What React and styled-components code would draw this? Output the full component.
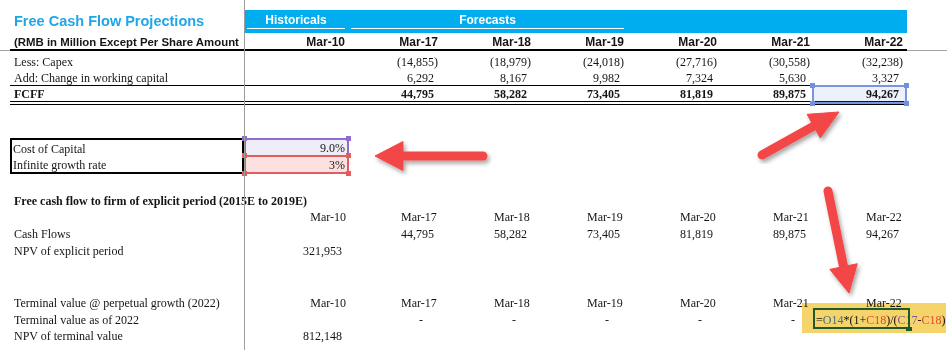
import React from 'react';
import styled, { createGlobalStyle } from 'styled-components';

const GlobalStyle = createGlobalStyle`
  html, body { margin: 0; padding: 0; background: #fff; }
  body {
    font-family: "Liberation Serif", "Times New Roman", serif;
    font-size: 12px;
    color: #151515;
  }
`;

const SANS = '"Liberation Sans", Arial, sans-serif';
const COLS = '234px 105px repeat(6, 93px)';

const Page = styled.div`
  position: relative;
  width: 947px;
  height: 350px;
  overflow: hidden;
  padding: 10px 0 0 10px;
  box-sizing: border-box;
`;

const TopRow = styled.div`
  display: grid;
  grid-template-columns: 234px 663px;
  height: 24px;
`;

const Title = styled.div`
  font-family: ${SANS};
  font-weight: 700;
  font-size: 14.5px;
  color: #1fa6e6;
  padding: 3px 0 0 4px;
  line-height: 16px;
  white-space: nowrap;
`;

const Bar = styled.div`
  display: grid;
  grid-template-columns: 105px 279px 1fr;
  height: 23px;
  background: #00aeef;
`;

const BarGroup = styled.div`
  margin: 0 ${p => p.$mr}px 0 ${p => p.$ml}px;
  padding-top: 3px;
  height: 15px;
  border-bottom: 1px solid #fff;
  color: #fff;
  font-family: ${SANS};
  font-weight: 700;
  font-size: 12px;
  line-height: 15px;
  text-align: center;
`;

const Row = styled.div`
  position: ${p => (p.$raise ? 'relative' : 'static')};
  z-index: ${p => (p.$raise ? 1 : 'auto')};
  display: grid;
  grid-template-columns: ${COLS};
  width: 897px;
  height: ${p => p.$h}px;
  box-sizing: border-box;
  margin-top: ${p => p.$mt || 0}px;
  border-bottom: ${p => p.$rule || 'none'};
  font-family: ${p => (p.$sans ? SANS : 'inherit')};
  font-weight: ${p => (p.$bold ? 700 : 400)};
`;

const Cell = styled.div`
  position: relative;
  display: flex;
  align-items: flex-end;
  justify-content: ${p => (p.$left ? 'flex-start' : 'flex-end')};
  padding: 0 ${p => p.$pr ?? 4}px 0 ${p => p.$pl ?? 0}px;
  line-height: 14px;
  font-size: ${p => p.$fs || 'inherit'};
  white-space: nowrap;
  overflow: ${p => (p.$clip ? 'hidden' : 'visible')};
  min-width: 0;
`;

const Inner = styled.span`
  display: inline-block;
  width: 37px;
  text-align: left;
`;

const Selection = styled.div`
  position: absolute;
  top: -1px;
  bottom: -3px;
  left: -2px;
  right: 0;
  border: 2px solid #7896e0;
  background: rgba(110, 145, 225, 0.13);
`;

const Handle = styled.span`
  position: absolute;
  width: 5px;
  height: 5px;
  background: ${p => p.$color};
  ${p => (p.$pos[0] === 't' ? 'top: -4px;' : 'bottom: -4px;')}
  ${p => (p.$pos[1] === 'l' ? 'left: -4px;' : 'right: -4px;')}
`;

const CostBlock = styled.div`
  display: grid;
  grid-template-columns: 234px 105px;
  margin-top: 33px;
  height: 36px;
`;

const CostLabels = styled.div`
  border: 2px solid #000;
  display: grid;
  grid-template-rows: 16px 16px;
`;

const CostLabel = styled.div`
  display: flex;
  align-items: flex-end;
  padding-left: 1px;
  line-height: 14px;
  white-space: nowrap;
`;

const CostValues = styled.div`
  display: flex;
  flex-direction: column;
`;

const TONES = {
  purple: { line: '#8f6dcc', fill: '#efedf8' },
  red: { line: '#e25d5d', fill: '#fde0e0' },
};

const ValueCell = styled.div`
  position: relative;
  box-sizing: border-box;
  height: ${p => (p.$tone === 'purple' ? 17 : 19)}px;
  border: 2px solid ${p => TONES[p.$tone].line};
  border-bottom: ${p => (p.$tone === 'purple' ? 'none' : `2px solid ${TONES[p.$tone].line}`)};
  background: ${p => TONES[p.$tone].fill};
  display: flex;
  align-items: flex-end;
  justify-content: flex-end;
  padding-right: 2px;
  line-height: 14px;
`;

const FreezeV = styled.div`
  position: absolute;
  z-index: 3;
  left: 244px;
  top: 0;
  width: 1px;
  height: 350px;
  background: #9c9c9c;
`;

const FreezeH = styled.div`
  position: absolute;
  left: 0;
  top: 50px;
  width: 947px;
  height: 1px;
  background: #a3a3a3;
`;

const Formula = styled.div`
  position: absolute;
  z-index: 4;
  left: 802px;
  top: 303px;
  width: 144px;
  height: 30px;
  box-sizing: border-box;
  padding: 9px 0 0 14px;
  background: #f6d46c;
  mix-blend-mode: multiply;
  line-height: 14px;
  white-space: nowrap;
  color: #111;
`;

const EditBox = styled.div`
  position: absolute;
  left: 11px;
  top: 5px;
  width: 97px;
  height: 21px;
  box-sizing: border-box;
  border: 2px solid #1f5a2c;
`;

const EditHandle = styled.span`
  position: absolute;
  right: -4px;
  bottom: -4px;
  width: 6px;
  height: 4px;
  background: #1f5a2c;
`;

const Ref = styled.span`
  color: ${p => p.$c};
`;

const Caret = styled.span`
  display: inline-block;
  width: 1px;
  height: 15px;
  margin-left: 1px;
  vertical-align: -3px;
  background: #000;
`;

const ArrowLayer = styled.svg`
  position: absolute;
  z-index: 5;
  left: 0;
  top: 0;
  pointer-events: none;
`;

function arrowShape(x1, y1, x2, y2, L, W) {
  const dx = x2 - x1;
  const dy = y2 - y1;
  const len = Math.hypot(dx, dy);
  const ux = dx / len;
  const uy = dy / len;
  const nx = -uy;
  const ny = ux;
  const bx = x2 - ux * L;
  const by = y2 - uy * L;
  return {
    line: { x1, y1, x2: bx + ux * 3, y2: by + uy * 3 },
    head: `${x2},${y2} ${bx + (nx * W) / 2},${by + (ny * W) / 2} ${bx - (nx * W) / 2},${by - (ny * W) / 2}`,
  };
}

const ARROWS = [
  arrowShape(483, 156, 375, 156, 28, 29),
  arrowShape(762, 155, 839, 112, 29, 27),
  arrowShape(828, 191, 849, 293, 27, 28),
];

const Arrows = () => (
  <ArrowLayer width="947" height="350" viewBox="0 0 947 350">
    <defs>
      <filter id="arrowShadow" x="-20%" y="-20%" width="140%" height="140%">
        <feDropShadow dx="2" dy="3" stdDeviation="2" floodColor="#000" floodOpacity="0.35" />
      </filter>
    </defs>
    {ARROWS.map((a, i) => (
      <g key={i} filter="url(#arrowShadow)" fill="#f34646" stroke="#f34646">
        <line {...a.line} strokeWidth="9" strokeLinecap="round" />
        <polygon points={a.head} strokeWidth="1" strokeLinejoin="round" />
      </g>
    ))}
  </ArrowLayer>
);

const MONTHS = ['Mar-17', 'Mar-18', 'Mar-19', 'Mar-20', 'Mar-21', 'Mar-22'];
const CAPEX = ['(14,855)', '(18,979)', '(24,018)', '(27,716)', '(30,558)', '(32,238)'];
const WC = ['6,292', '8,167', '9,982', '7,324', '5,630', '3,327'];
const FCFF = ['44,795', '58,282', '73,405', '81,819', '89,875', '94,267'];

export default function App() {
  return (
    <>
      <GlobalStyle />
      <Page>
        <FreezeH />
        <TopRow>
          <Title>Free Cash Flow Projections</Title>
          <Bar>
            <BarGroup $ml={3} $mr={4}>Historicals</BarGroup>
            <BarGroup $ml={2} $mr={4}>Forecasts</BarGroup>
          </Bar>
        </TopRow>

        <Row $h={17} $rule="2px solid #000" $sans $bold $raise>
          <Cell $left $pl={4} $pr={0} $fs="11.4px">(RMB in Million Except Per Share Amount</Cell>
          <Cell>Mar-10</Cell>
          {MONTHS.map(m => (
            <Cell key={m}>{m}</Cell>
          ))}
        </Row>

        <Row $h={18}>
          <Cell $left $pl={4}>Less: Capex</Cell>
          <Cell />
          {CAPEX.map(v => (
            <Cell key={v}>{v}</Cell>
          ))}
        </Row>

        <Row $h={17} $rule="1px solid #000">
          <Cell $left $pl={4}>Add: Change in working capital</Cell>
          <Cell />
          {WC.map(v => (
            <Cell key={v} $pr={8}>{v}</Cell>
          ))}
        </Row>

        <Row $h={19} $rule="4px double #000" $bold>
          <Cell $left $pl={4}>FCFF</Cell>
          <Cell />
          {FCFF.map((v, i) => (
            <Cell key={v} $pr={8}>
              {i === 5 && (
                <Selection>
                  <Handle $pos="tl" $color="#6f8fe0" />
                  <Handle $pos="tr" $color="#6f8fe0" />
                  <Handle $pos="bl" $color="#6f8fe0" />
                  <Handle $pos="br" $color="#6f8fe0" />
                </Selection>
              )}
              <span style={{ position: 'relative' }}>{v}</span>
            </Cell>
          ))}
        </Row>

        <CostBlock>
          <CostLabels>
            <CostLabel>Cost of Capital</CostLabel>
            <CostLabel>Infinite growth rate</CostLabel>
          </CostLabels>
          <CostValues>
            <ValueCell $tone="purple">
              9.0%
              <Handle $pos="tl" $color="#8f6dcc" />
              <Handle $pos="tr" $color="#8f6dcc" />
            </ValueCell>
            <ValueCell $tone="red">
              3%
              <Handle $pos="tl" $color="#e25d5d" />
              <Handle $pos="tr" $color="#e25d5d" />
              <Handle $pos="bl" $color="#e25d5d" />
              <Handle $pos="br" $color="#e25d5d" />
            </ValueCell>
          </CostValues>
        </CostBlock>

        <Row $h={16} $mt={18} $bold>
          <Cell $left $pl={4}>Free cash flow to firm of explicit period (2015E to 2019E)</Cell>
        </Row>

        <Row $h={16}>
          <Cell />
          <Cell $pr={3}>Mar-10</Cell>
          {MONTHS.map(m => (
            <Cell key={m}><Inner>{m}</Inner></Cell>
          ))}
        </Row>

        <Row $h={17}>
          <Cell $left $pl={4}>Cash Flows</Cell>
          <Cell />
          {FCFF.map(v => (
            <Cell key={v}><Inner>{v}</Inner></Cell>
          ))}
        </Row>

        <Row $h={17}>
          <Cell $left $pl={4}>NPV of explicit period</Cell>
          <Cell $pr={7}>321,953</Cell>
        </Row>

        <Row $h={17} $mt={35}>
          <Cell $left $pl={4}>Terminal value @ perpetual growth (2022)</Cell>
          <Cell $pr={3}>Mar-10</Cell>
          {MONTHS.map(m => (
            <Cell key={m}><Inner>{m}</Inner></Cell>
          ))}
        </Row>

        <Row $h={17}>
          <Cell $left $pl={4}>Terminal value as of 2022</Cell>
          <Cell />
          {MONTHS.map((m, i) => (
            <Cell key={m} $pr={19}>{i < 5 ? '-' : ''}</Cell>
          ))}
        </Row>

        <Row $h={16}>
          <Cell $left $pl={4}>NPV of terminal value</Cell>
          <Cell $pr={7}>812,148</Cell>
        </Row>

        <FreezeV />

        <Formula>
          <EditBox>
            <EditHandle />
          </EditBox>
          =<Ref $c="#3d6d8a">O14</Ref>*(1+<Ref $c="#e4472c">C18</Ref>)/(<Ref $c="#7a5a96">C17</Ref>-<Ref $c="#e4472c">C18</Ref>)<Caret />
        </Formula>

        <Arrows />
      </Page>
    </>
  );
}
